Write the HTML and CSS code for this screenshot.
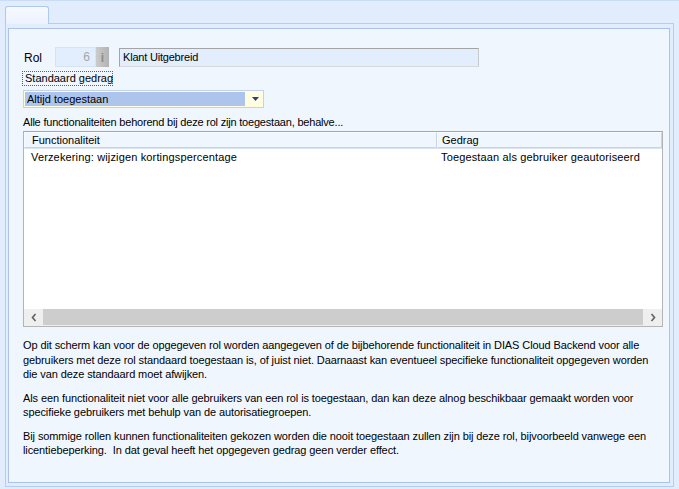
FILE: index.html
```html
<!DOCTYPE html>
<html>
<head>
<meta charset="utf-8">
<link rel="stylesheet" href="styles.css">
</head>
<body>
<div class="window">
  <div class="tabstrip"><div class="tab"></div></div>
  <div class="frame">
    <div class="page">
      <div class="rol-row">
        <span class="rol-label">Rol</span>
        <div class="num-field">6</div>
        <div class="info-btn">i</div>
        <div class="name-field">Klant Uitgebreid</div>
      </div>
      <div class="std-label">Standaard gedrag</div>
      <div class="combo">
        <div class="combo-value">Altijd toegestaan</div>
        <div class="combo-btn"><svg width="7" height="4" viewBox="0 0 7 4"><path d="M0 0h7L3.5 4z" fill="#26408c"/></svg></div>
      </div>
      <div class="caption">Alle functionaliteiten behorend bij deze rol zijn toegestaan, behalve...</div>
      <div class="grid">
        <div class="grid-head">
          <div class="col1 hcell">Functionaliteit</div>
          <div class="col2 hcell">Gedrag</div>
        </div>
        <div class="grid-row">
          <div class="col1">Verzekering: wijzigen kortingspercentage</div>
          <div class="col2">Toegestaan als gebruiker geautoriseerd</div>
        </div>
        <div class="grid-body"></div>
        <div class="hscroll">
          <div class="arrow"><svg width="6" height="9" viewBox="0 0 6 9"><path d="M4.5 1L1.5 4.5L4.5 8" fill="none" stroke="#606060" stroke-width="1.6"/></svg></div>
          <div class="thumb"></div>
          <div class="arrow"><svg width="6" height="9" viewBox="0 0 6 9"><path d="M1.5 1L4.5 4.5L1.5 8" fill="none" stroke="#606060" stroke-width="1.6"/></svg></div>
        </div>
      </div>
      <div class="help">
        <p>Op dit scherm kan voor de opgegeven rol worden aangegeven of de bijbehorende functionaliteit in DIAS Cloud Backend voor alle gebruikers met deze rol standaard toegestaan is, of juist niet. Daarnaast kan eventueel specifieke functionaliteit opgegeven worden die van deze standaard moet afwijken.</p>
        <p>Als een functionaliteit niet voor alle gebruikers van een rol is toegestaan, dan kan deze alnog beschikbaar gemaakt worden voor specifieke gebruikers met behulp van de autorisatiegroepen.</p>
        <p>Bij sommige rollen kunnen functionaliteiten gekozen worden die nooit toegestaan zullen zijn bij deze rol, bijvoorbeeld vanwege een licentiebeperking.&nbsp; In dat geval heeft het opgegeven gedrag geen verder effect.</p>
      </div>
    </div>
  </div>
</div>
</body>
</html>
```
FILE: styles.css
```css
* { box-sizing: border-box; }
html, body { margin: 0; padding: 0; }
body {
  font-family: "Liberation Sans", Arial, sans-serif;
  font-size: 11px;
  color: #000;
  background: #e2edfd;
}
.window {
  width: 679px;
  height: 489px;
  background: #e1ecfd;
  border-top: 1px solid #cadcf6;
  overflow: hidden;
}
.tabstrip {
  height: 22px;
  padding-left: 5px;
  display: flex;
  align-items: flex-end;
}
.tab {
  width: 44px;
  height: 18px;
  border: 1px solid #aec8ee;
  border-bottom: none;
  border-radius: 3px 3px 0 0;
  background: linear-gradient(#f6f9fe, #ecf3fe);
  position: relative;
  top: 1px;
}
.frame {
  margin-left: 5px;
  width: 669px;
  height: 464px;
  border: 1px solid #b4cdf0;
  padding: 4px 3px 3px 2px;
}
.page {
  height: 100%;
  border: 1px solid #a9c3ec;
  background: #f0f6fe;
  padding: 18px 0 0 14px;
}
.rol-row {
  display: flex;
  align-items: center;
  height: 20px;
}
.rol-label {
  width: 32px;
  padding-left: 1px;
  padding-top: 2px;
  font-size: 12px;
}
.num-field {
  width: 41px;
  height: 20px;
  background: #e2edfd;
  border: 1px solid #d6e3f6;
  color: #a6a6a6;
  text-align: right;
  padding-right: 5px;
  line-height: 18px;
  font-size: 12px;
}
.info-btn {
  width: 13px;
  height: 20px;
  background: linear-gradient(90deg, #cbcbcb, #b3b3b3);
  color: #8a8a8a;
  font-weight: bold;
  font-size: 12px;
  text-align: center;
  line-height: 22px;
}
.name-field {
  margin-left: 10px;
  width: 360px;
  height: 19px;
  border: 1px solid #a4a4a4;
  border-right-color: #c8c8c8;
  border-bottom-color: #d8d8d8;
  background: #e2edfd;
  padding-left: 3px;
  line-height: 17px;
  letter-spacing: -0.2px;
}
.std-label {
  margin-top: 4px;
  margin-left: -1px;
  width: 91px;
  height: 15px;
  border: 1px dotted #606060;
  line-height: 13px;
  padding-left: 2px;
  white-space: nowrap;
}
.combo {
  margin-top: 4px;
  width: 241px;
  height: 18px;
  border: 1px solid #c3d2e8;
  background: #fffde2;
  display: flex;
  padding: 1px;
}
.combo-value {
  width: 220px;
  background: #adc4ec;
  line-height: 14px;
  padding-left: 2px;
}
.combo-btn {
  flex: 1;
  display: flex;
  align-items: center;
  justify-content: center;
  padding-left: 3px;
}
.caption {
  margin-top: 7px;
  height: 16px;
  letter-spacing: -0.2px;
  line-height: 14px;
}
.grid {
  width: 640px;
  height: 196px;
  border: 1px solid #b4b4b4;
  border-top-color: #a6a6a6;
  background: #fff;
  display: flex;
  flex-direction: column;
}
.grid-head {
  display: flex;
  height: 17px;
  background: #f0f6fe;
  border-bottom: 1px solid #d8e3f3;
}
.hcell {
  border: 1px solid #c4d4ec;
  border-left-color: #f8fbff;
  border-top-color: #f8fbff;
  line-height: 15px;
}
.col1 { width: 413px; padding-left: 7px; flex: none; }
.col2 { width: 225px; padding-left: 4px; flex: none; }
.grid-row {
  display: flex;
  height: 18px;
  line-height: 17px;
  letter-spacing: 0.15px;
}
.grid-body { flex: 1; }
.hscroll {
  height: 17px;
  display: flex;
  background: #efefef;
  align-items: stretch;
}
.arrow {
  width: 19px;
  display: flex;
  align-items: center;
  justify-content: center;
}
.thumb {
  flex: 1;
  background: #cdcdcd;
  margin: 0 0 1px 0;
}
.help {
  margin-top: 11px;
  width: 630px;
  letter-spacing: -0.1px;
  line-height: 14.5px;
}
.help p { margin: 0 0 9px 0; }
```
